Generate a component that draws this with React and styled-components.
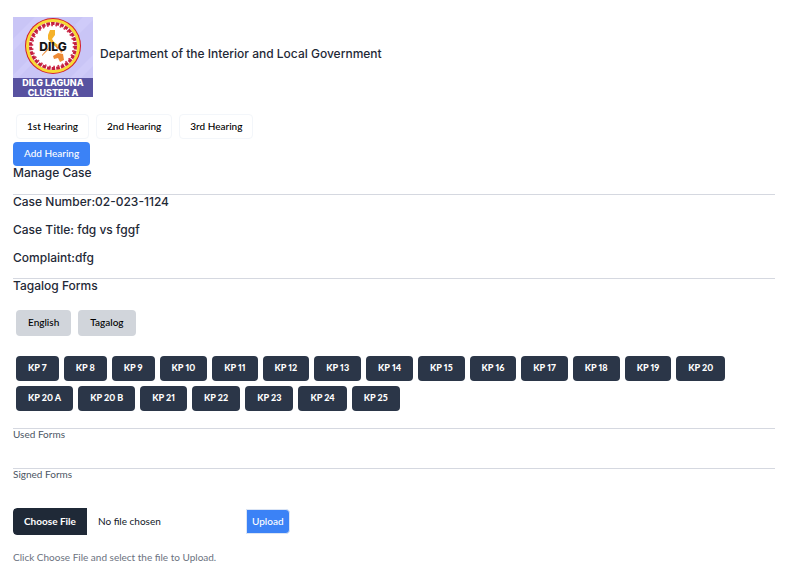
import React from "react";
import styled, { createGlobalStyle } from "styled-components";

const GlobalStyle = createGlobalStyle`
  *, *::before, *::after { box-sizing: border-box; }
  body {
    margin: 0;
    background: #fff;
    color: #1f2937;
    font-family: Lato, "Liberation Sans", sans-serif;
    font-size: 10px;
    line-height: 14px;
  }
  button, input { font: inherit; }
`;

const Page = styled.main`
  padding: 17px 12px 0 13px;
`;

const Header = styled.header`
  display: flex;
  align-items: center;
  gap: 7px;
  margin-bottom: 17px;
`;

const Logo = styled.svg`
  display: block;
  flex: none;
  width: 80px;
  height: 80px;
`;

const Heading = styled.h2`
  margin: 0;
  font-family: Inter, "Liberation Sans", sans-serif;
  font-size: 12px;
  font-weight: 500;
  line-height: 14px;
`;

const Title = styled(Heading)`
  padding-bottom: 6px;
`;

const ButtonRow = styled.div`
  display: flex;
  flex-wrap: wrap;
  gap: 5px ${(p) => p.$gap || 7}px;
  padding: 0 3px;
`;

const Button = styled.button`
  height: 25px;
  padding: 0 11px 2px;
  border: 1px solid transparent;
  border-radius: 4px;
  color: #000;
  font-size: 10px;
  font-weight: 500;
  line-height: 14px;
  white-space: nowrap;
  cursor: pointer;
`;

const HearingButton = styled(Button)`
  padding: 0 10px 2px;
  background: #fff;
  border-color: #f3f6fa;
`;

const AddButton = styled(Button)`
  display: block;
  height: 24px;
  margin: 3px 0 0;
  padding: 0 10px 2px;
  background: #3b82f6;
  color: #fff;
`;

const LanguageButton = styled(Button)`
  height: 26px;
  background: #d1d5db;
`;

const FormButton = styled(Button)`
  background: #2b3648;
  color: #fff;
  font-size: 9px;
  font-weight: 900;
  font-variant-numeric: proportional-nums;
`;

const Section = styled.section`
  border-top: ${(p) => (p.$plain ? "0" : "1px solid #d5d8e0")};
  padding-bottom: ${(p) => p.$space}px;
`;

const Details = styled.div`
  display: grid;
  gap: 14px;
`;

const Languages = styled.div`
  margin: 17px 0 20px;
`;

const SmallHeading = styled.h3`
  margin: 0;
  color: #4b5563;
  font-size: 10px;
  font-weight: 400;
  line-height: 10px;
`;

const UploadForm = styled.form`
  display: flex;
  align-items: center;
`;

const FileInput = styled.input`
  width: 233px;
  height: 27px;
  border-radius: 4px;
  color: #111827;
  font-size: 10px;
  line-height: 27px;

  &::file-selector-button {
    height: 27px;
    margin: 0 11px 0 0;
    padding: 0 11px;
    border: 0;
    border-radius: 4px 0 0 4px;
    background: #1f2937;
    color: #fff;
    font: inherit;
    font-weight: 700;
    cursor: pointer;
  }
`;

const UploadButton = styled(Button)`
  padding: 0 5px 2px;
  border-color: #dbe5f5;
  border-radius: 0 4px 4px 0;
  background: #3b82f6;
  color: #fff;
`;

const Help = styled.p`
  margin: 15px 0 0;
  color: #6b7280;
  font-size: 10px;
  line-height: 14px;
`;

const hearings = ["1st Hearing", "2nd Hearing", "3rd Hearing"];
const forms = [
  "7", "8", "9", "10", "11", "12", "13", "14", "15", "16", "17", "18", "19",
  "20", "20 A", "20 B", "21", "22", "23", "24", "25",
];

function ClusterLogo() {
  return (
    <Logo viewBox="0 0 80 80" role="img" aria-label="DILG Laguna Cluster A">
      <rect width="80" height="80" fill="#c9c5f6" />
      <path d="M0 22L22 0H34L0 34ZM0 58L15 43L19 47L0 66ZM57 61L80 38V49L68 61ZM62 8L70 0H80V3L67 16Z" fill="#cfcbf9" />
      <circle cx="40" cy="29" r="28" fill="#d3202b" />
      <circle cx="40" cy="29" r="27" fill="#f8db36" />
      <circle cx="40" cy="29" r="24" fill="#fff" />
      <circle cx="40" cy="29" r="22.5" fill="none" stroke="#c41f40" strokeWidth="3" strokeDasharray="3.6 1.1" />
      <circle cx="40" cy="29" r="20.6" fill="none" stroke="#cf3450" strokeWidth="1.6" strokeDasharray="1.8 2.5" />
      <path d="M37 13L42 13L42 18L39 22L41 25L45 28L43 30L38 26L35 22L35 18Z" fill="#f5b22b" />
      <path d="M29 38L36 30L35 33L29 39ZM42 28L47 31L44 32ZM46 31L51 33L48 36ZM40 39L45 36L50 37L51 43L47 45L45 41L41 42Z" fill="#ed8a35" />
      <text x="40" y="34" textAnchor="middle" fontFamily="Inter, sans-serif" fontSize="12" fontWeight="800" fill="#151515">DILG</text>
      <rect y="61" width="80" height="19" fill="#5852a0" />
      <text fontFamily="Inter, sans-serif" fontSize="9" fontWeight="800" textAnchor="middle" fill="#fff">
        <tspan x="40" y="69">DILG LAGUNA</tspan>
        <tspan x="40" y="79">CLUSTER A</tspan>
      </text>
    </Logo>
  );
}

export default function App() {
  return (
    <>
      <GlobalStyle />
      <Page>
        <Header>
          <ClusterLogo />
          <Title as="h1">Department of the Interior and Local Government</Title>
        </Header>

        <ButtonRow as="nav" aria-label="Hearings">
          {hearings.map((name) => (
            <HearingButton type="button" key={name}>{name}</HearingButton>
          ))}
        </ButtonRow>
        <AddButton type="button">Add Hearing</AddButton>

        <Section $plain $space={14}>
          <Heading>Manage Case</Heading>
        </Section>

        <Section $space={13}>
          <Details>
            <Heading>Case Number:02-023-1124</Heading>
            <Heading>Case Title: fdg vs fggf</Heading>
            <Heading>Complaint:dfg</Heading>
          </Details>
        </Section>

        <Section $space={17}>
          <Heading>Tagalog Forms</Heading>
          <Languages>
            <ButtonRow>
              <LanguageButton type="button">English</LanguageButton>
              <LanguageButton type="button">Tagalog</LanguageButton>
            </ButtonRow>
          </Languages>
          <ButtonRow $gap={5}>
            {forms.map((form) => (
              <FormButton type="button" key={form}>KP {form}</FormButton>
            ))}
          </ButtonRow>
        </Section>

        <Section $space={29}>
          <SmallHeading>Used Forms</SmallHeading>
        </Section>

        <Section $space={29}>
          <SmallHeading>Signed Forms</SmallHeading>
        </Section>

        <UploadForm onSubmit={(event) => event.preventDefault()}>
          <FileInput type="file" aria-label="File to upload" aria-describedby="upload-help" />
          <UploadButton type="submit">Upload</UploadButton>
        </UploadForm>
        <Help id="upload-help">Click Choose File and select the file to Upload.</Help>
      </Page>
    </>
  );
}
